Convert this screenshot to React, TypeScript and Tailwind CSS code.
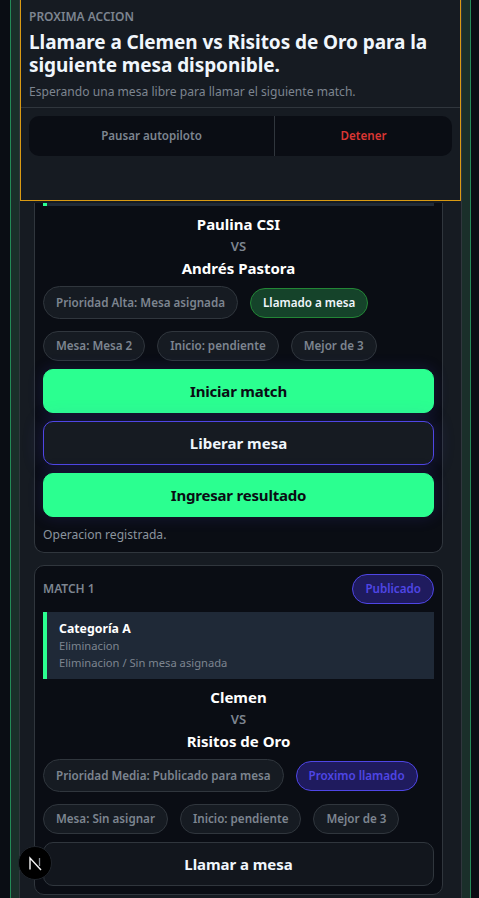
const font = { fontFamily: '"Noto Sans", sans-serif' };

function Chip({ children, tone = "muted", tall = false }: { children: React.ReactNode; tone?: "muted" | "green" | "blue"; tall?: boolean }) {
  const tones = {
    muted: "border-[#30363d] bg-[#161b22] text-[#7d8590]",
    green: "border-[#238636] bg-[#15432a] text-[#f0f6fc]",
    blue: "border-[#4f46e5] bg-[#1f1b5e] text-[#4f46e5]",
  };
  return (
    <span className={`flex items-center justify-center rounded-full border px-[12px] text-[11.65px] font-semibold whitespace-nowrap ${tall ? "h-[33px]" : "h-[30px]"} ${tones[tone]}`}>
      {children}
    </span>
  );
}

function Btn({ children, kind }: { children: React.ReactNode; kind: "green" | "blue" | "plain" }) {
  const k = {
    green: "border-[#2bff90] bg-[#2bff90] text-[#0a0d14] tracking-[-0.2px] shadow-[0_0_16px_rgba(79,70,229,0.18)]",
    blue: "border-[#4f46e5] bg-[#161b22] text-[#f0f6fc] shadow-[0_0_20px_rgba(79,70,229,0.25)]",
    plain: "border-[#30363d] bg-[#12161d] text-[#f0f6fc] tracking-[-0.05px]",
  };
  return (
    <button className={`h-[44px] w-full rounded-[10px] border text-[15px] font-bold ${k[kind]}`}>{children}</button>
  );
}

function Names({ a, b }: { a: string; b: string }) {
  return (
    <div className="flex flex-col items-center">
      <div className="flex h-[22px] items-center text-[15px] font-bold text-white">{a}</div>
      <div className="flex h-[22px] items-center pt-[2px] text-[13px] font-semibold text-[#7d8590]">VS</div>
      <div className="flex h-[22px] items-center text-[15px] font-bold text-white">{b}</div>
    </div>
  );
}

export default function App() {
  return (
    <div className="relative h-[898px] w-[479px] overflow-hidden bg-[#0a0d14]" style={font}>
      <div className="ml-[10px] mr-[8px] h-[898px] border-x border-[#238a57] bg-[#1a2f2a] px-[8px]">
        <div className="h-[898px] border-x border-[#30363d] bg-[#161b22]">
          <div className="flex h-[201px] flex-col border border-t-0 border-[#d99a13] bg-[#161b22]">
            <div className="px-[8px]">
              <div className="mt-[8px] flex h-[17px] items-center text-[12px] font-semibold text-[#7d8590]">PROXIMA ACCION</div>
              <div className="mt-[6px] text-[19px] leading-[23px] font-bold tracking-[-0.07px] text-[#f0f6fc]">
                Llamare a Clemen vs Risitos de Oro para la siguiente mesa disponible.
              </div>
              <div className="mt-[5px] flex h-[20px] items-center text-[12.1px] text-[#7d8590]">
                Esperando una mesa libre para llamar el siguiente match.
              </div>
              <div className="h-[5px]" />
            </div>
            <div className="border-t border-[#30363d] px-[8px] pt-[8px]">
              <div className="flex h-[40px] rounded-[10px] bg-[#0a0d14] text-[11.6px] font-semibold">
                <div className="flex w-[245px] items-center justify-center text-[#7d8590]">Pausar autopiloto</div>
                <div className="w-px bg-[#30363d]" />
                <div className="flex flex-1 items-center justify-center text-[#da3633]">Detener</div>
              </div>
            </div>
          </div>

          <div className="mr-[18px] ml-[14px] mt-[2px] h-[350px] rounded-b-[10px] border border-t-0 border-[#30363d] bg-[#0a0d14] px-[8px]">
            <div className="h-[3px] border-l-[4px] border-[#2bff90] bg-[#1f2937]" />
            <div className="mt-[7px]">
              <Names a="Paulina CSI" b="Andrés Pastora" />
            </div>
            <div className="mt-[7px] flex items-center gap-[12px]">
              <Chip tall>Prioridad Alta: Mesa asignada</Chip>
              <Chip tone="green">Llamado a mesa</Chip>
            </div>
            <div className="mt-[12px] flex gap-[12px]">
              <Chip>Mesa: Mesa 2</Chip>
              <Chip>Inicio: pendiente</Chip>
              <Chip>Mejor de 3</Chip>
            </div>
            <div className="mt-[8px] flex flex-col gap-[8px]">
              <Btn kind="green">Iniciar match</Btn>
              <Btn kind="blue">Liberar mesa</Btn>
              <Btn kind="green">Ingresar resultado</Btn>
            </div>
            <div className="mt-[8px] flex h-[20px] items-center pt-[1px] text-[12.1px] text-[#8b949e]">Operacion registrada.</div>
          </div>

          <div className="mr-[18px] ml-[14px] mt-[12px] h-[330px] rounded-[10px] border border-[#30363d] bg-[#0a0d14] px-[8px] pt-[8px]">
            <div className="flex items-center justify-between">
              <span className="text-[12px] font-semibold text-[#7d8590]">MATCH 1</span>
              <Chip tone="blue">Publicado</Chip>
            </div>
            <div className="mt-[8px] flex h-[67px] flex-col justify-center border-l-[4px] border-[#2bff90] bg-[#1f2937] pl-[12px]">
              <div className="flex h-[18px] items-center pt-[1px] text-[12.3px] font-bold text-white">Categoría A</div>
              <div className="flex h-[17px] items-center text-[11.2px] text-[#7d8590]">Eliminacion</div>
              <div className="flex h-[17px] items-center text-[11.2px] text-[#7d8590]">Eliminacion / Sin mesa asignada</div>
            </div>
            <div className="mt-[7px]">
              <Names a="Clemen" b="Risitos de Oro" />
            </div>
            <div className="mt-[7px] flex items-center gap-[12px]">
              <Chip tall>Prioridad Media: Publicado para mesa</Chip>
              <Chip tone="blue">Proximo llamado</Chip>
            </div>
            <div className="mt-[12px] flex gap-[12px]">
              <Chip>Mesa: Sin asignar</Chip>
              <Chip>Inicio: pendiente</Chip>
              <Chip>Mejor de 3</Chip>
            </div>
            <div className="mt-[8px]">
              <Btn kind="plain">Llamar a mesa</Btn>
            </div>
          </div>
        </div>
      </div>

      <div className="absolute top-[846px] left-[18px] flex h-[34px] w-[34px] items-center justify-center rounded-full border border-[#1f242b] bg-black">
        <svg width="15" height="15" viewBox="0 0 15 15" fill="none">
          <path d="M2 13.5V2L13 14" stroke="#f5f5f5" strokeWidth="1.4" />
          <path d="M11.5 2V10" stroke="#8a9096" strokeWidth="1.3" />
        </svg>
      </div>
    </div>
  );
}
